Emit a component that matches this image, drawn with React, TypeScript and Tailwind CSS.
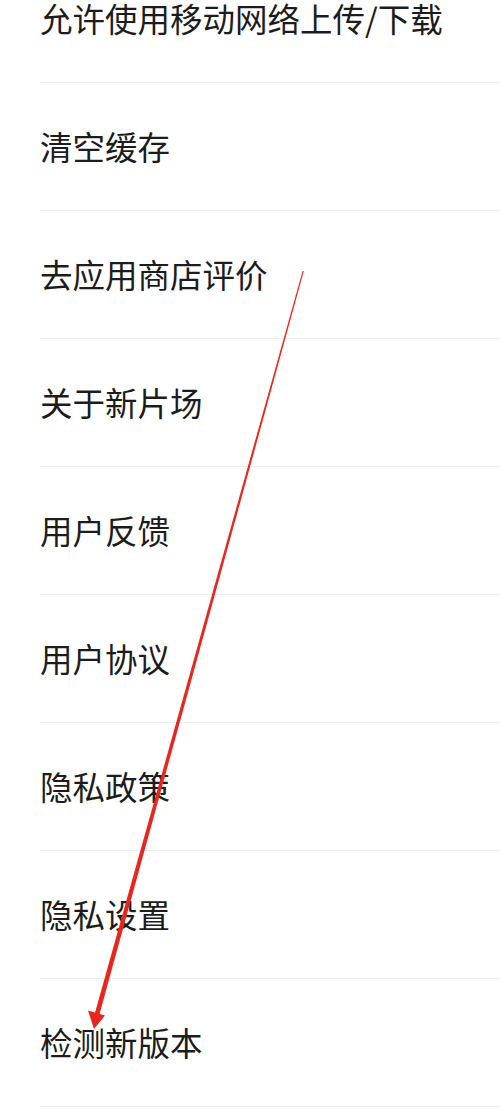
const items = [
  "允许使用移动网络上传/下载",
  "清空缓存",
  "去应用商店评价",
  "关于新片场",
  "用户反馈",
  "用户协议",
  "隐私政策",
  "隐私设置",
  "检测新版本",
];

export default function App() {
  return (
    <div className="relative w-[500px] h-[1113px] overflow-hidden bg-white">
      <ul
        className="-mt-[45px] text-[32.5px] text-[#1c1c1c]"
        style={{ fontFamily: '"Noto Sans CJK SC", "Noto Sans", sans-serif' }}
      >
        {items.map((label) => (
          <li key={label} className="pl-10">
            <div className="flex h-[127px] items-center">{label}</div>
            <div className="h-px bg-[#efefef]" />
          </li>
        ))}
      </ul>

      {/* red annotation arrow */}
      <svg
        className="pointer-events-none absolute left-0 top-0"
        width="500"
        height="1113"
        viewBox="0 0 500 1113"
      >
        <polygon
          points="303.8,271 302.6,271 94.8,1013.4 99.4,1014.6"
          fill="#e8261f"
        />
        <polygon points="94,1029 88,1010.5 105,1015.5" fill="#e8261f" />
      </svg>
    </div>
  );
}
